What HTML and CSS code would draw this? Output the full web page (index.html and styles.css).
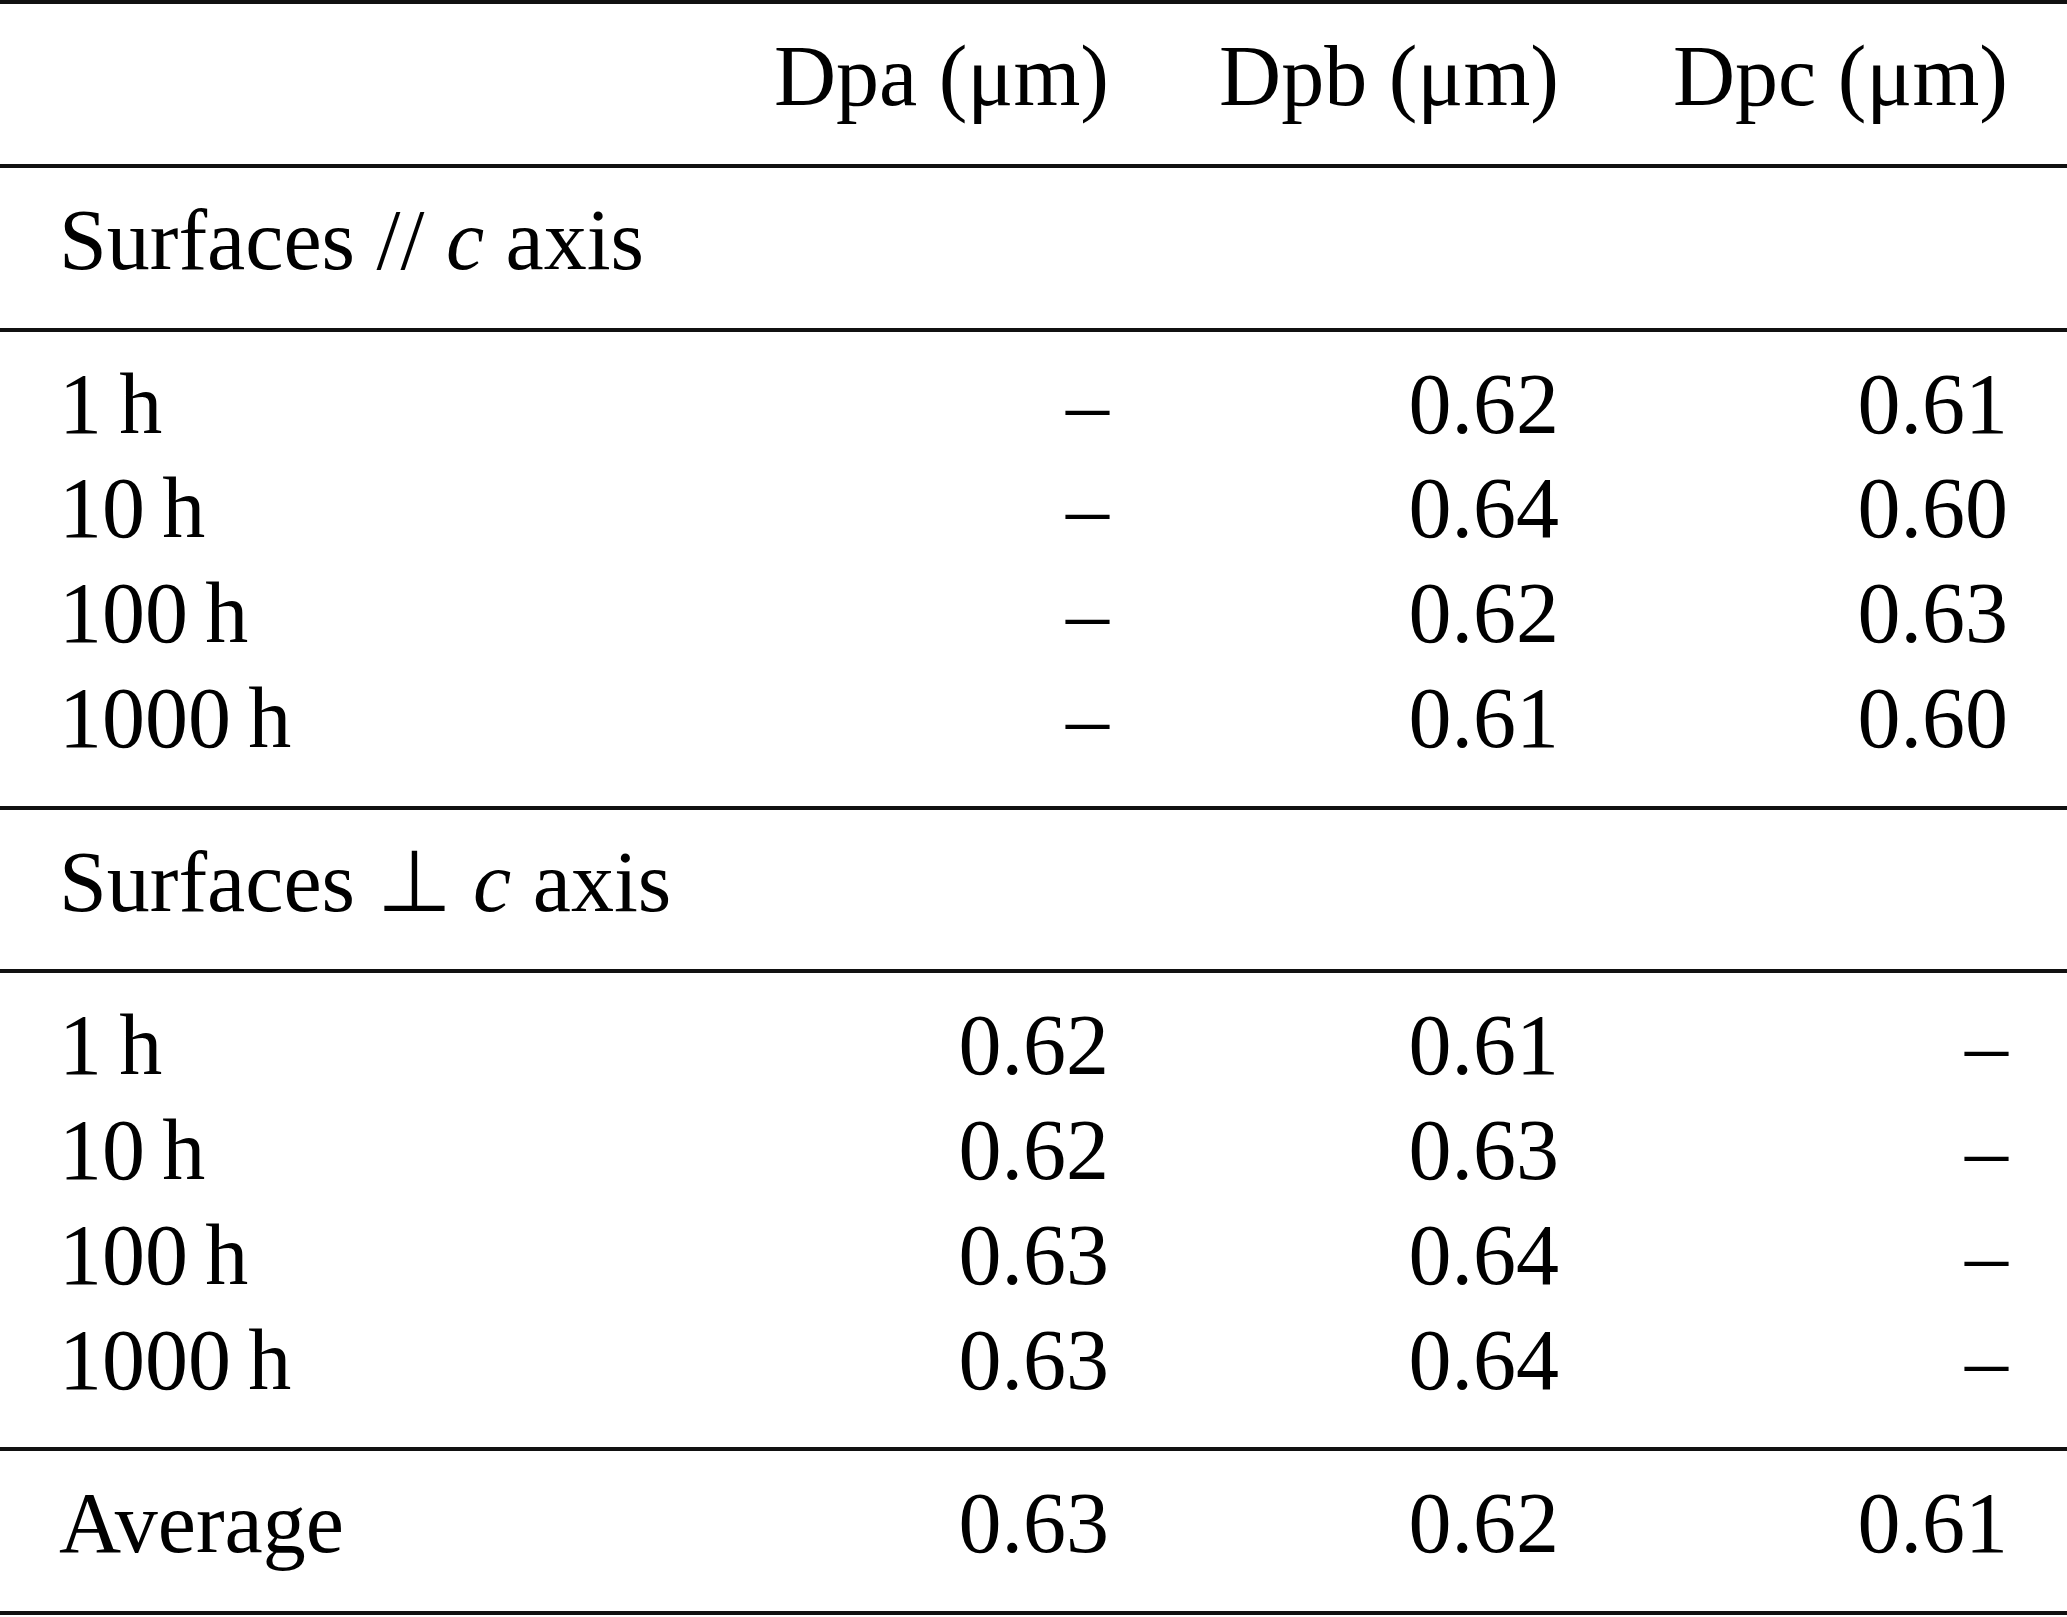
FILE: index.html
```html
<!DOCTYPE html>
<html lang="en">
<head>
<meta charset="utf-8">
<title>Dp table</title>
<link rel="stylesheet" href="styles.css">
</head>
<body>
<div class="table">
  <div class="group">
    <div class="cell"></div>
    <div class="cell num">Dpa (μm)</div>
    <div class="cell num">Dpb (μm)</div>
    <div class="cell num">Dpc (μm)</div>
  </div>
  <div class="group">
    <div class="cell span">Surfaces // <i>c</i> axis</div>
  </div>
  <div class="group">
    <div class="cell">1&#8201;h</div><div class="cell num">–</div><div class="cell num">0.62</div><div class="cell num">0.61</div>
    <div class="cell">10&#8201;h</div><div class="cell num">–</div><div class="cell num">0.64</div><div class="cell num">0.60</div>
    <div class="cell">100&#8201;h</div><div class="cell num">–</div><div class="cell num">0.62</div><div class="cell num">0.63</div>
    <div class="cell">1000&#8201;h</div><div class="cell num">–</div><div class="cell num">0.61</div><div class="cell num">0.60</div>
  </div>
  <div class="group">
    <div class="cell span">Surfaces <span class="perp">⊥</span> <i>c</i> axis</div>
  </div>
  <div class="group">
    <div class="cell">1&#8201;h</div><div class="cell num">0.62</div><div class="cell num">0.61</div><div class="cell num">–</div>
    <div class="cell">10&#8201;h</div><div class="cell num">0.62</div><div class="cell num">0.63</div><div class="cell num">–</div>
    <div class="cell">100&#8201;h</div><div class="cell num">0.63</div><div class="cell num">0.64</div><div class="cell num">–</div>
    <div class="cell">1000&#8201;h</div><div class="cell num">0.63</div><div class="cell num">0.64</div><div class="cell num">–</div>
  </div>
  <div class="group last">
    <div class="cell">Average</div><div class="cell num">0.63</div><div class="cell num">0.62</div><div class="cell num">0.61</div>
  </div>
</div>
</body>
</html>
```

FILE: styles.css
```css
html, body {
  margin: 0;
  padding: 0;
  background: #fff;
}

body {
  font-family: "Liberation Serif", "Times New Roman", serif;
  font-size: 86px;
  color: #000;
}

.table {
  width: 2067px;
}

.group {
  display: grid;
  grid-template-columns: 600px 450px 450px 449px;
  line-height: 104.75px;
  padding: 20px 59px 35px;
  border-top: 4px solid #111;
}

.group.last {
  border-bottom: 4px solid #111;
}

.cell {
  white-space: nowrap;
}

.num {
  text-align: right;
}

.span {
  grid-column: 1 / -1;
}

.perp {
  font-family: "DejaVu Sans", sans-serif;
  font-weight: 200;
  font-size: 1em;
  line-height: 1;
}

i {
  font-style: italic;
}
```
